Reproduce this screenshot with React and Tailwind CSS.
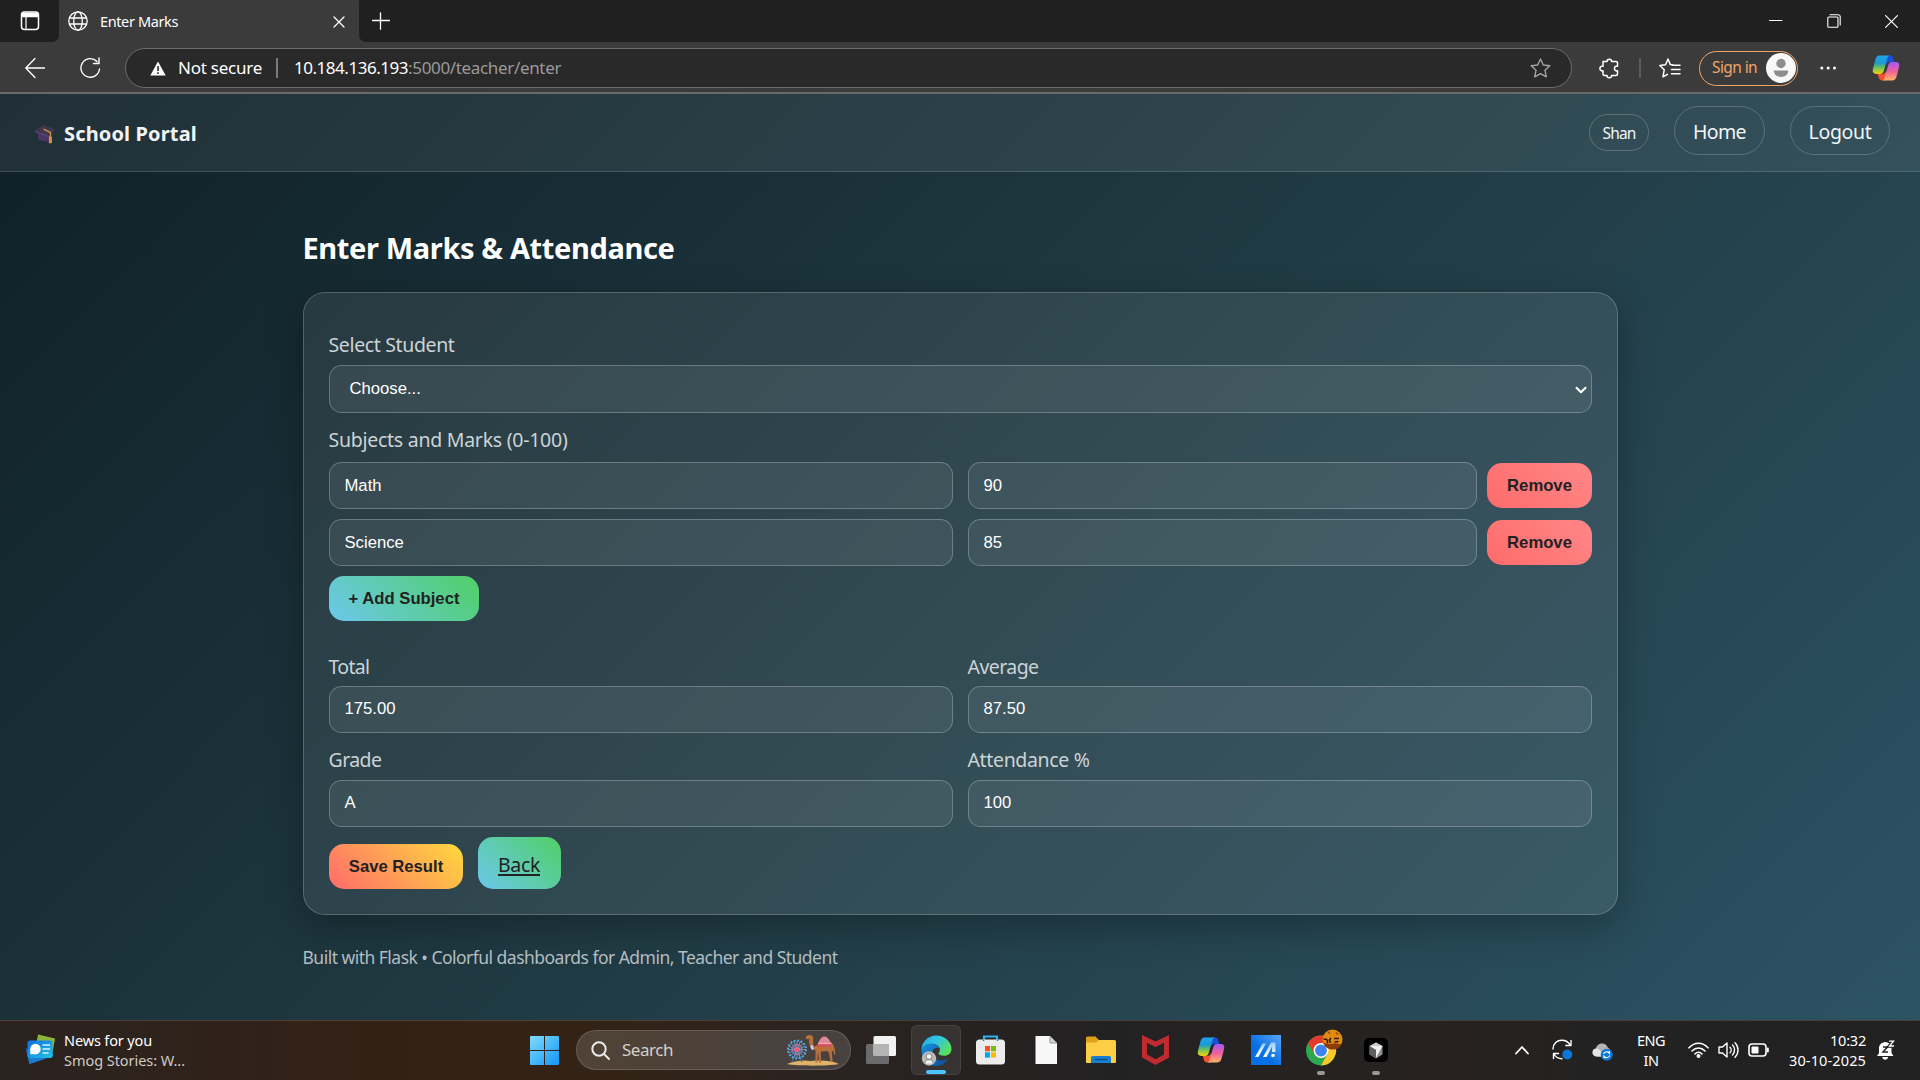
import React from "react";

const line = { fill: "none", stroke: "currentColor", strokeLinecap: "round", strokeLinejoin: "round" };

function TabStrip() {
  return (
    <div className="flex h-[42px] items-stretch bg-[#3b3b3b] text-white">
      <div className="flex w-[59px] items-center rounded-br-[7px] bg-[#202020] pl-[20px]">
        <svg className="h-5 w-5" viewBox="0 0 20 20" {...line} strokeWidth="1.5">
          <rect x="1.5" y="1" width="17" height="17.5" rx="3" />
          <path d="M2 2.5h16v3H2z" fill="currentColor" />
          <path d="M6 6v12.5" strokeWidth="1.2" />
        </svg>
      </div>
      <div className="flex w-[300px] items-center rounded-t-[8px] bg-[#3b3b3b] pl-[9px] pr-[14px]">
        <svg className="h-5 w-5" viewBox="0 0 20 20" {...line} strokeWidth="1.3">
          <circle cx="10" cy="10" r="9.2" />
          <ellipse cx="10" cy="10" rx="4.3" ry="9.2" />
          <path d="M1.5 7h17M1.5 13h17" />
        </svg>
        <span className="ml-3 grow whitespace-nowrap text-[14.5px] leading-5 tracking-[-0.38px]">Enter Marks</span>
        <svg className="mt-0.5 h-3 w-3" viewBox="0 0 12 12" {...line} strokeWidth="1.3">
          <path d="M1 1l10 10M11 1L1 11" />
        </svg>
      </div>
      <div className="flex grow items-center rounded-bl-[7px] bg-[#202020] pl-[13px] pr-[22px]">
        <svg className="h-[18px] w-[18px]" viewBox="0 0 18 18" {...line} strokeWidth="1.3">
          <path d="M8.500 .8v16.400M.5 8.500h17" />
        </svg>
        <span className="grow" />
        <svg className="h-[14px] w-[14px]" viewBox="0 0 14 14" {...line} strokeWidth="1">
          <path d="M.5 6.5h12.500" />
        </svg>
        <svg className="ml-[44px] h-[14px] w-[14px]" viewBox="0 0 14 14" {...line} strokeWidth="1.1">
          <rect x=".8" y="3" width="10.2" height="10.2" rx="1" />
          <path d="M3 .8h8.200a2 2 0 0 1 2 2V11" />
        </svg>
        <svg className="ml-[44px] h-[13px] w-[13px]" viewBox="0 0 13 13" {...line} strokeWidth="1.2">
          <path d="M.6.6l11.800 11.800M12.400.6L.6 12.400" />
        </svg>
      </div>
    </div>
  );
}

function Copilot({ id, className }) {
  return (
    <svg className={className} viewBox="0 0 28 26">
      <defs>
        <linearGradient id={id + "a"} x1="0" y1="0" x2="0" y2="1">
          <stop offset="0" stopColor="#1fa2ee" />
          <stop offset=".4" stopColor="#1a9bd0" />
          <stop offset=".7" stopColor="#7cc64a" />
          <stop offset="1" stopColor="#f4d01c" />
        </linearGradient>
        <linearGradient id={id + "b"} x1="0" y1="0" x2="0" y2="1">
          <stop offset="0" stopColor="#a259f5" />
          <stop offset=".5" stopColor="#ee5f9d" />
          <stop offset="1" stopColor="#ffb366" />
        </linearGradient>
      </defs>
      <path d="M15 0.6h3.2c1.8 0 2.6 1 3.1 2.8l1 3.6h-4.5c-2 0-3 .8-3.600 2.800l-1-5z" fill="#1c4fd8" />
      <path d="M13 25.400H9.800c-1.800 0-2.600-1-3.100-2.800l-1-3.700h4.500c2 0 3-.8 3.600-2.800l1 5z" fill="#f4512f" />
      <path d="M7.500.6h10c-1.300.6-1.800 1.800-2.300 3.500l-3.300 11.300c-.7 2.400-1.700 3.500-4 3.500H4.500C1.300 18.900.2 17 1 13.800L3.300 5C4 2.300 5.200.6 7.500.6z" fill={`url(#${id}a)`} />
      <path d="M20.500 25.400h-10c1.300-.6 1.800-1.800 2.300-3.500l3.300-11.300c.7-2.400 1.700-3.500 4-3.500h3.400c3.200 0 4.300 1.900 3.500 5.100L24.700 21c-.7 2.700-1.900 4.400-4.200 4.400z" fill={`url(#${id}b)`} />
    </svg>
  );
}

function Toolbar() {
  return (
    <div className="flex h-[52px] items-center border-b-2 border-[#6a6a6a] bg-[#3b3b3b] pl-[25px] pr-[17px] pt-0.5 text-white">
      <svg className="h-[22px] w-[20px]" viewBox="0 0 20 22" {...line} strokeWidth="1.3">
        <path d="M19.500 11H1M10 1.500L.8 11l9.200 9.500" />
      </svg>
      <svg className="ml-[35px] h-[22px] w-[21px]" viewBox="0 0 21 22" {...line} strokeWidth="1.4">
        <path d="M19.500 12A9.300 9.300 0 1 1 17 4.500M19 1v5.500h-5.500" />
      </svg>
      <div className="ml-[24px] flex h-10 w-[1447px] items-center rounded-full border border-[#6b6b6b] bg-[#292929] pl-[24px] pr-[20px]">
        <svg className="h-[15px] w-4" viewBox="0 0 16 15">
          <path d="M8 .5L15.700 14.500H.3z" fill="#fff" />
          <path d="M8 5v5M8 11.300v1.600" stroke="#292929" strokeWidth="1.600" />
        </svg>
        <span className="ml-[12px] w-[84px] whitespace-nowrap text-[17px] tracking-[-0.24px]">Not secure</span>
        <span className="ml-[14px] h-5 w-[2px] bg-[#7b7b7b]" />
        <span className="ml-[16px] whitespace-nowrap text-[17px] tracking-[-0.47px]">10.184.136.193</span>
        <span className="whitespace-nowrap text-[17px] tracking-[-0.34px] text-[#9a9a9a]">:5000/teacher/enter</span>
        <span className="grow" />
        <svg className="h-[20px] w-[21px] text-[#a3a3a3]" viewBox="0 0 21 20" {...line} strokeWidth="1.400">
          <path d="M10.500 1l2.800 6 6.500.8-4.800 4.500 1.300 6.600-5.800-3.200-5.800 3.200L6 12.300 1.200 7.800l6.500-.8z" />
        </svg>
      </div>
      <svg className="ml-[27px] h-[21px] w-[20px]" viewBox="0 0 20 21" {...line} strokeWidth="1.500">
        <path d="M4 3.500h4a2.300 2.300 0 0 1 4.600 0H17a1.500 1.500 0 0 1 1.500 1.500v3.200a2.400 2.400 0 1 0 0 4.600V16a1.500 1.500 0 0 1-1.500 1.500h-4.400a2.300 2.300 0 0 1-4.600 0H5.500A1.500 1.500 0 0 1 4 16v-3.200a2.400 2.400 0 1 1 0-4.600z" />
      </svg>
      <span className="ml-[20px] h-5 w-[2px] bg-[#5c5c5c]" />
      <svg className="ml-[18px] h-5 w-[22px]" viewBox="0 0 22 20" {...line} strokeWidth="1.500">
        <path d="M13.500 6.800l-2.200-.2L9 1 6.500 6.700l-5.700.8 4.400 4.300L4 18.800l4.500-2.500" />
        <path d="M13.500 7.300H21M12.500 11.500H21M12.500 15.700H21" />
      </svg>
      <div className="ml-[18px] flex h-[35px] w-[99px] items-center rounded-full border-[1.5px] border-[#f0a469] pl-[12px] text-[15.500px] tracking-[-0.6px] text-[#f0a469]">
        <span className="w-[54px] whitespace-nowrap">Sign in</span>
        <svg className="h-[30px] w-[30px] shrink-0" viewBox="0 0 30 30">
          <circle cx="15" cy="15" r="15" fill="#f8f8f8" />
          <circle cx="15" cy="10.500" r="4.700" fill="#8e8e8e" />
          <path d="M8 17.500h14c.6 3.500-2.500 6.500-7 6.500s-7.600-3-7-6.500z" fill="#8e8e8e" />
        </svg>
      </div>
      <svg className="ml-[22px] h-1 w-4" viewBox="0 0 16 4" fill="#fff">
        <circle cx="1.800" cy="2" r="1.500" />
        <circle cx="8.200" cy="2" r="1.500" />
        <circle cx="14.500" cy="2" r="1.500" />
      </svg>
      <Copilot id="cpt" className="ml-[36px] h-[26px] w-[28px]" />
    </div>
  );
}

function NavBar() {
  return (
    <nav className="flex h-[78px] items-center border-b border-white/15 bg-white/[0.07] pl-[34px] pr-[30px] text-[#f1f5f7]">
      <svg className="mt-[3px] h-[20px] w-[22px]" viewBox="0 0 22 20">
        <path d="M4 9v6c2.500 2.500 8.500 3 12 1V9z" fill="#4b3566" />
        <path d="M.5 6.500L9.500.8l11 4.200-4.500 7.500z" fill="#41374c" />
        <path d="M.5 6.500l15.500 6v1.200L1.500 8.300z" fill="#5d4477" />
        <path d="M9.500 5.200l7 3.300v5" fill="none" stroke="#c98d3f" strokeWidth="1.400" />
        <path d="M15 12.500h2.800l.2 6.800h-3.200z" fill="#e08d48" />
      </svg>
      <span className="ml-[8px] mt-0.5 grow whitespace-nowrap text-[20px] font-bold tracking-[0.15px]">School Portal</span>
      <span className="flex h-[37px] w-[60px] items-center justify-center whitespace-nowrap rounded-full border border-white/20 pt-0.5 text-[15.500px] tracking-[-0.84px]">
        Shan
      </span>
      <a className="mb-[4px] ml-[25px] flex h-[49px] w-[91px] items-center justify-center whitespace-nowrap rounded-full border border-white/20 pt-[3px] text-[19.500px] tracking-[-0.62px]">
        Home
      </a>
      <a className="mb-[4px] ml-[25px] flex h-[49px] w-[100px] items-center justify-center whitespace-nowrap rounded-full border border-white/20 pt-[3px] text-[19.500px] tracking-[-0.32px]">
        Logout
      </a>
    </nav>
  );
}

const arial = "font-['Liberation_Sans',Arial,sans-serif] text-[16.667px]";

function Field({ children, className = "", textClass = "-mt-px" }) {
  return (
    <div className={`flex h-[47px] items-center whitespace-nowrap rounded-[12.500px] border border-white/25 bg-white/[0.07] pl-[15px] text-white ${arial} ${className}`}>
      <span className={textClass}>{children}</span>
    </div>
  );
}

function Label({ children, className }) {
  return <div className={`h-7 whitespace-nowrap pt-px text-[19.500px] leading-7 text-[#ccd3d7] ${className}`}>{children}</div>;
}

function Button({ children, className }) {
  return (
    <button className={`flex h-[45px] items-center justify-center whitespace-nowrap rounded-[15px] pl-px font-bold text-[#222222] ${arial} ${className}`}>
      {children}
    </button>
  );
}

function SubjectRow({ subject, mark }) {
  return (
    <div className="grid grid-cols-2 items-center gap-[15px]">
      <Field>{subject}</Field>
      <div className="flex items-center gap-[10px]">
        <Field className="grow">{mark}</Field>
        <Button className="w-[105px] bg-[linear-gradient(45deg,#ff6b6b,#ff8787)]">Remove</Button>
      </div>
    </div>
  );
}

function MarksPage() {
  return (
    <div className="flex h-[926px] flex-col bg-[linear-gradient(135deg,#0f2027,#203a43,#2c5364)]">
      <NavBar />
      <main className="mx-auto w-[1315px] pt-[56px]">
        <h1 className="h-10 whitespace-nowrap text-[29px] font-bold leading-10 tracking-[-0.366px] text-white">
          Enter Marks &amp; Attendance
        </h1>
        <section className="mt-[24px] rounded-[22px] border border-white/20 bg-white/[0.08] px-[25px] pb-[25px] pt-[37px] shadow-[0_12px_38px_rgba(0,0,0,0.28)]">
          <Label className="tracking-[-0.36px]">Select Student</Label>
          <div className={`mt-[7px] flex h-[48px] items-center justify-between rounded-[12.500px] border border-white/25 bg-white/[0.07] pl-[20px] pr-[4px] text-white ${arial}`}>
            <span className="-mt-0.5">Choose...</span>
            <svg className="mt-0.5 h-3 w-3" viewBox="0 0 12 12" {...line} strokeWidth="2">
              <path d="M1.500 3.800L6 8.300l4.500-4.500" />
            </svg>
          </div>
          <Label className="mt-3 tracking-[-0.26px]">Subjects and Marks (0-100)</Label>
          <div className="mt-[9px] flex flex-col gap-[10px]">
            <SubjectRow subject="Math" mark="90" />
            <SubjectRow subject="Science" mark="85" />
            <Button className="w-[150px] bg-[linear-gradient(45deg,#6ac8ec,#51cf66)]">+ Add Subject</Button>
          </div>
          <div className="mt-[31px] grid grid-cols-2 gap-x-[15px]">
            <Label className="tracking-[-0.66px]">Total</Label>
            <Label className="tracking-[-0.56px]">Average</Label>
            <Field className="mt-[6px]" textClass="-mt-[3px]">175.00</Field>
            <Field className="mt-[6px]" textClass="-mt-[3px]">87.50</Field>
            <Label className="mt-3 tracking-[-0.56px]">Grade</Label>
            <Label className="mt-3 tracking-[-0.35px]">Attendance %</Label>
            <Field className="mt-[7px]" textClass="-mt-[3px]">A</Field>
            <Field className="mt-[7px]" textClass="-mt-[3px]">100</Field>
          </div>
          <div className="mt-[10px] flex items-end gap-[15px]">
            <Button className="w-[134px] bg-[linear-gradient(45deg,#ff6b6b,#ffd93d)]">Save Result</Button>
            <a className="flex h-[52px] w-[83px] items-center justify-center whitespace-nowrap rounded-[15px] bg-[linear-gradient(45deg,#6ac8ec,#51cf66)] pt-1 text-[19.500px] tracking-[-0.35px] text-[#222222] underline decoration-2 underline-offset-2">
              Back
            </a>
          </div>
        </section>
        <footer className="mt-[30px] h-6 whitespace-nowrap text-[17.500px] leading-6 tracking-[-0.522px] text-[#b2bcc1]">
          Built with Flask • Colorful dashboards for Admin, Teacher and Student
        </footer>
      </main>
    </div>
  );
}

function NewsIcon() {
  return (
    <svg className="h-[31px] w-[31px]" viewBox="0 0 31 31">
      <defs>
        <linearGradient id="nw" x1="0" y1="0" x2="1" y2="1">
          <stop offset="0" stopColor="#0f6fe0" />
          <stop offset="1" stopColor="#25c2e8" />
        </linearGradient>
      </defs>
      <path d="M13 .5l17 4-2.500 14L11 12z" fill="#8cb53c" />
      <path d="M.5 14L4.500 30 20 25z" fill="#1264b8" />
      <path d="M4.500 30L28 22v-3L3 24z" fill="#1b7ccb" />
      <rect x="2.500" y="6.500" width="25" height="17.500" rx="2" fill="url(#nw)" />
      <circle cx="10.500" cy="15" r="5.200" fill="#fff" />
      <path d="M5.300 20.200V15h5.200v5.200z" fill="#fff" />
      <path d="M17.500 11h7.500M17.500 15h7.500M17.500 19h6" stroke="#d9f4ff" strokeWidth="1.500" />
    </svg>
  );
}

function CamelArt() {
  const spokes = [0, 22.5, 45, 67.5, 90, 112.5, 135, 157.5];
  return (
    <svg className="h-[32px] w-[54px]" viewBox="0 0 54 32">
      <path d="M1 30c7-3 16-4.500 24-3 10-1 20-.5 28 3-12 2.200-40 2.200-52 0z" fill="#e0b267" />
      <path d="M11 16l-5 12M11 16l5 12" stroke="#3f6fae" strokeWidth="1.200" />
      <g stroke="#5aa9e6" fill="none">
        <circle cx="11" cy="15.500" r="9" strokeWidth="2" strokeDasharray="1.800 1.730" />
        {spokes.map((a) => (
          <path key={a} d="M2 15.500h18" strokeWidth=".9" transform={`rotate(${a} 11 15.500)`} />
        ))}
        <circle cx="11" cy="15.500" r="5" stroke="#d0749c" strokeWidth="1" />
      </g>
      <circle cx="11" cy="15.500" r="2.500" fill="#ff5c74" />
      <path d="M20 3.500c0-1.300 1.500-2.500 3.200-2.500 1.800 0 3.800.5 4 2.500.3 3.500-.4 6 .4 8 1 1.500 2.600.3 4.400-1.500C33.500 5.500 36 2.500 38.500 2.500c3 0 4.500 3.500 6.500 6 3 2 4 6 4.300 12l-1 .5-1.200-5-1.300 2.500.8 9.500h-2l-1.600-9-1.600-2-6.600.5.2 11h-1.900l-1-10.500-1 10.500h-1.700l.2-12c-3.500-1.500-6-4-6.500-7.500-.3-2.200.2-3 0-4.200l-3.500.4z" fill="#b87039" />
      <path d="M32 9.500c2-4.500 4-7 6.500-7s4.500 3 6.500 7z" fill="#d9899c" />
      <path d="M32 9.500h13.500" stroke="#ff9db5" strokeWidth="1.500" />
      <path d="M31.500 11.500h14" stroke="#e33f77" strokeWidth="1.500" />
      <path d="M25.300 11.500l1.500 4" stroke="#d9d0ef" strokeWidth="2.500" />
    </svg>
  );
}

function EdgeIcon() {
  return (
    <svg className="h-[31px] w-[31px]" viewBox="0 0 31 31">
      <defs>
        <linearGradient id="eg1" x1="0" y1="0" x2="1" y2=".6">
          <stop offset="0" stopColor="#28a5e6" />
          <stop offset=".5" stopColor="#31c7e0" />
          <stop offset="1" stopColor="#5be05a" />
        </linearGradient>
        <linearGradient id="eg2" x1="0" y1="0" x2="1" y2="1">
          <stop offset="0" stopColor="#1691dd" />
          <stop offset="1" stopColor="#0c4b98" />
        </linearGradient>
      </defs>
      <path d="M15 .5C23.500.5 30.500 6.500 30.500 14c0 4-3.300 6.800-7.500 6.800-3.500 0-5.600-1-5.600-2.200 0-.9 1.500-1.400 1.500-4 0-3-3.200-5.900-8-5.900C6 8.700 1.500 11.500.5 15 .5 7 7 .5 15 .5z" fill="url(#eg1)" />
      <path d="M.5 15C1.500 10.500 6 8.700 10.500 8.700c4.500 0 8 2.700 8.300 5.300-1.400-2-6.300-1.600-7.300 2.500-1.400 5.700 4.500 9.500 9.500 9 3-.3 5-1.400 6.500-2.500C25 28 20.500 31 15.500 31 7 31 .5 24 .5 15z" fill="url(#eg2)" />
      <circle cx="8" cy="23.500" r="7.200" fill="#b9b9b9" />
      <circle cx="8" cy="21.500" r="2.900" fill="#f4f4f4" stroke="#777" strokeWidth=".9" />
      <path d="M3.800 28.500c0-3 2-3.800 4.200-3.800s4.200.8 4.200 3.800" fill="#f4f4f4" stroke="#777" strokeWidth=".9" />
    </svg>
  );
}

function ChromeIcon() {
  return (
    <svg className="h-[37px] w-[37px]" viewBox="0 0 37 37">
      <circle cx="15" cy="21.500" r="15" fill="#2da94f" />
      <path d="M15 21.500L2 14A15 15 0 0 1 28 14H15z" fill="#e33b2e" />
      <path d="M28 14a15 15 0 0 1-13 22.500L21.500 25 15 14z" fill="#fdc727" />
      <path d="M2 14l6.500 11.500L15 21.500 15 14z" fill="#e33b2e" />
      <circle cx="15" cy="21.500" r="7.500" fill="#fff" />
      <circle cx="15" cy="21.500" r="5.900" fill="#3f83f0" />
      <circle cx="26.500" cy="10.500" r="10" fill="#e08a12" />
      <path d="M17 13.500a10 10 0 0 0 18.500 1.500c-3 1-5-1.500-8-.5s-6 1-10.500-1z" fill="#8a3d08" />
      <path d="M17.500 10c2 0 3.500 0 4 1.500v3M25 9l-1.500 2 1 3M28 9.500h5M28.500 13l4-.5" stroke="#33190a" strokeWidth="1.600" fill="none" />
      <path d="M22 3l2 1.500M30 3.500l2 2" stroke="#8a4a08" strokeWidth="1.500" />
    </svg>
  );
}

function TaskbarCenter() {
  return (
    <div className="flex h-full items-center pb-px">
      <svg className="h-[29px] w-[29px]" viewBox="0 0 29 29">
        <defs>
          <linearGradient id="win" x1="0" y1="0" x2="1" y2="1">
            <stop offset="0" stopColor="#7fdcff" />
            <stop offset="1" stopColor="#1396f5" />
          </linearGradient>
        </defs>
        <path d="M1 0h13v14H0V1a1 1 0 0 1 1-1zM15 0h13a1 1 0 0 1 1 1v13H15zM0 15h14v14H1a1 1 0 0 1-1-1zM15 15h14v13a1 1 0 0 1-1 1H15z" fill="url(#win)" />
      </svg>
      <div className="ml-[17px] flex h-10 w-[275px] items-center rounded-full border border-white/15 bg-white/[0.14] pl-[14px] pr-[10px]">
        <svg className="h-[19px] w-[19px] text-[#eceaea]" viewBox="0 0 19 19" {...line} strokeWidth="2">
          <circle cx="8" cy="8" r="6.700" />
          <path d="M13 13l5 5" />
        </svg>
        <span className="ml-[12px] grow whitespace-nowrap text-[17px] tracking-[-0.47px] text-[#d5d0cd]">Search</span>
        <CamelArt />
      </div>
      <svg className="ml-[15px] h-[29px] w-[30px]" viewBox="0 0 30 29">
        <rect x="0" y="8" width="23" height="20" rx="1.500" fill="#6b6b6b" />
        <rect x="7.500" y="0" width="22.500" height="20" rx="1.500" fill="#f2f2f2" />
        <path d="M7.500 8H23v12H9a1.500 1.500 0 0 1-1.500-1.500z" fill="#b4b4b4" />
      </svg>
      <div className="relative ml-[15px] flex h-[50px] w-[50px] items-center justify-center rounded-[6px] border border-white/[0.08] bg-white/[0.08]">
        <EdgeIcon />
        <span className="absolute bottom-0 h-1 w-5 rounded-full bg-[#4cc2ff]" />
      </div>
      <svg className="ml-[15px] h-[30px] w-[29px]" viewBox="0 0 29 30">
        <path d="M8 6V1.500h13V6" fill="none" stroke="#2fb4ea" strokeWidth="2.200" />
        <rect y="4.500" width="29" height="25" rx="3.500" fill="#ececec" />
        <path d="M7.500 4.500V6M21.500 4.500V6" stroke="#1384cd" strokeWidth="1.500" />
        <path d="M9 11h5v5.300H9z" fill="#f25022" />
        <path d="M15 11h5v5.300h-5z" fill="#7fba00" />
        <path d="M9 17.300h5v5.300H9z" fill="#00a4ef" />
        <path d="M15 17.300h5v5.300h-5z" fill="#ffb900" />
      </svg>
      <svg className="ml-[30px] h-[28px] w-[22px]" viewBox="0 0 22 28">
        <path d="M.5 0H15l7 7v21H.5z" fill="#f7f7f7" />
        <path d="M15 0v7h7z" fill="#d2d2d2" stroke="#858585" strokeWidth=".8" />
      </svg>
      <svg className="ml-[29px] h-[28px] w-[30px]" viewBox="0 0 30 28">
        <path d="M0 2a1.500 1.500 0 0 1 1.500-1.500h8L13 4v5H0z" fill="#dea01a" />
        <path d="M0 6.500h10L13 4h15.500A1.500 1.500 0 0 1 30 5.500V26a1 1 0 0 1-1 1H1a1 1 0 0 1-1-1z" fill="#fdce45" />
        <path d="M5 27v-5.500A1.500 1.500 0 0 1 6.500 20h17a1.500 1.500 0 0 1 1.500 1.500V27z" fill="#1b7fd0" />
        <path d="M8.500 23.500h13" stroke="#0b4f96" strokeWidth="1.500" />
      </svg>
      <svg className="ml-[26px] h-[30px] w-[27px]" viewBox="0 0 27 30">
        <path d="M0 0l13.500 6.500L27 0v22.500L13.500 30 0 22.500zM5 7.800v11.700l8.500 4.800 8.500-4.800V7.800l-8.500 4.200z" fill="#c02b2f" />
      </svg>
      <Copilot id="cpb" className="ml-[28px] h-[26px] w-[28px]" />
      <svg className="ml-[26px] h-[30px] w-[30px]" viewBox="0 0 30 30">
        <defs>
          <linearGradient id="asus" x1="0" y1="1" x2="1" y2="0">
            <stop offset=".4" stopColor="#066fe3" />
            <stop offset="1" stopColor="#5ba6f7" />
          </linearGradient>
          <linearGradient id="slash" x1="0" y1="1" x2="0" y2="0">
            <stop offset="0" stopColor="#ffffff" />
            <stop offset="1" stopColor="#9cc8fb" />
          </linearGradient>
        </defs>
        <path d="M0 0h30v30H0z" fill="url(#asus)" />
        <path d="M4 22L11.500 8.500h3.500L7.500 22zM12 22l8-14.500h4.500V17H21v-5.500L15.500 22z" fill="url(#slash)" />
        <circle cx="22" cy="20.500" r="1.800" fill="#fff" />
      </svg>
      <div className="relative ml-[25px] flex h-[50px] w-[37px] justify-center pt-1">
        <ChromeIcon />
        <span className="absolute bottom-0 left-[11px] h-1 w-2 rounded-full bg-[#9a9897]" />
      </div>
      <div className="relative ml-[21px] flex h-[50px] w-[24px] items-center justify-center">
        <svg className="h-6 w-6" viewBox="0 0 24 24">
          <rect width="24" height="24" rx="5" fill="#000" />
          <path d="M12 4.500l6.500 3.500v8.500L12 20.500l-6.500-4V8z" fill="#8d8d8d" />
          <path d="M5.500 8h13L12 20v-8z" fill="#f0f0f0" />
          <path d="M5.500 8l6.500 4v8l-6.500-3.500z" fill="#5e5e5e" />
          <path d="M12 4.500L18.500 8h-13z" fill="#c9c9c9" />
        </svg>
        <span className="absolute bottom-0 h-1 w-2 rounded-full bg-[#9a9897]" />
      </div>
    </div>
  );
}

function Tray() {
  return (
    <div className="flex h-full items-center pb-0.5 pr-[25px] text-white">
      <svg className="h-2.5 w-[14px]" viewBox="0 0 14 10" {...line} strokeWidth="1.800">
        <path d="M1 8.500L7 2l6 6.500" />
      </svg>
      <svg className="ml-[23px] h-[21px] w-[21px]" viewBox="0 0 21 21" {...line} strokeWidth="1.400">
        <path d="M1 10C1.200 4.500 5 1.300 9.800 1.300c4 0 6.800 2 8.500 5M19 1.500v5h-5.200M1.500 19.500v-5h5M2 15c1.500 3 4.500 4.700 8 4.700" />
        <circle cx="15.300" cy="15.500" r="5" fill="#0a78d6" stroke="none" />
      </svg>
      <svg className="ml-[19px] mt-1 h-[18px] w-[21px]" viewBox="0 0 21 18">
        <path d="M4.500 13.500C-1 13-.8 6 4 5.500 5-.5 14-1.500 16 5c3.500.5 3.500 8 0 8.500z" fill="#b5b5b5" />
        <path d="M4 5.500c3 0 5 2 7 8H4.500C-.5 13-.5 6 4 5.500z" fill="#e4e4e4" />
        <circle cx="14.700" cy="11.700" r="6" fill="#0a78d6" />
        <path d="M11.700 11c.3-2 4-3 5.600-.8V8M17.700 12.500c-.4 2-4 3-5.600.8v2" fill="none" stroke="#fff" strokeWidth="1.200" />
      </svg>
      <div className="ml-[24px] w-[28px] text-center text-[14.500px] leading-5 tracking-[-0.55px]">
        <div>ENG</div>
        <div>IN</div>
      </div>
      <svg className="ml-[23px] h-[16px] w-[21px]" viewBox="0 0 21 16" {...line} strokeWidth="1.600">
        <path d="M1 5.800c5.500-6 13.500-6 19 0M4 9c3.800-4 9.200-4 13 0M7 12c2-2.300 5-2.300 7 0" />
        <circle cx="10.500" cy="14" r="1.200" fill="currentColor" />
      </svg>
      <svg className="ml-[9px] h-[18px] w-[21px]" viewBox="0 0 21 18" {...line} strokeWidth="1.400">
        <path d="M1 6v6h3.500L9 16V2L4.500 6zM12 6.300c1.500 1.500 1.500 4 0 5.500M14.500 4c2.700 2.700 2.700 7.300 0 10M17 1.700c4 4 4 10.600 0 14.600" />
      </svg>
      <svg className="ml-[9px] h-[14px] w-[21px]" viewBox="0 0 21 14" {...line} strokeWidth="1.600">
        <rect x="1" y="1" width="17" height="12" rx="3" />
        <rect x="3.500" y="3.500" width="7" height="7" rx="1" fill="currentColor" stroke="none" />
        <path d="M19.800 5.500v3" strokeWidth="2" />
      </svg>
      <div className="ml-[20px] w-[77px] text-right text-[14.500px] leading-5">
        <div className="tracking-[-0.2px]">10:32</div>
        <div className="whitespace-nowrap tracking-[0.13px]">30-10-2025</div>
      </div>
      <svg className="ml-[11px] h-[20px] w-[18px]" viewBox="0 0 18 20">
        <path d="M0 16l2-3V7.500a6.300 6.300 0 0 1 12.500 0V13l2 3zM5.200 17h6c-.5 3.500-5.500 3.500-6 0z" fill="#fff" />
        <path d="M6 7h4.500L6 12h5M12 1.200h4.500L12.500 6H17" fill="none" stroke="#222" strokeWidth="1.500" />
        <path d="M12 1.200h4.500L12.500 6H17" fill="none" stroke="#222" strokeWidth="3.500" />
        <path d="M12 1.200h4.500L12.500 6H17" fill="none" stroke="#fff" strokeWidth="1.300" />
      </svg>
    </div>
  );
}

function Taskbar() {
  return (
    <div className="flex h-[60px] border-t border-[#4b3f38] bg-[linear-gradient(90deg,#2a2320_0%,#30221a_12%,#342115_20%,#332316_32%,#2b2320_42%,#262221_50%,#232222_58%,#272220_76%,#222222_84%,#212121_100%)]">
      <div className="flex w-[530px] items-center pb-0.5 pl-[25px]">
        <NewsIcon />
        <div className="ml-[8px] whitespace-nowrap text-[14.500px] leading-5">
          <div className="tracking-[-0.14px] text-white">News for you</div>
          <div className="tracking-[-0.05px] text-[#cfcac7]">Smog Stories: W...</div>
        </div>
      </div>
      <TaskbarCenter />
      <span className="grow" />
      <Tray />
    </div>
  );
}

export default function App() {
  return (
    <div className="flex h-[1080px] w-[1920px] flex-col overflow-hidden font-['Noto_Sans','Open_Sans',sans-serif]">
      <TabStrip />
      <Toolbar />
      <MarksPage />
      <Taskbar />
    </div>
  );
}
